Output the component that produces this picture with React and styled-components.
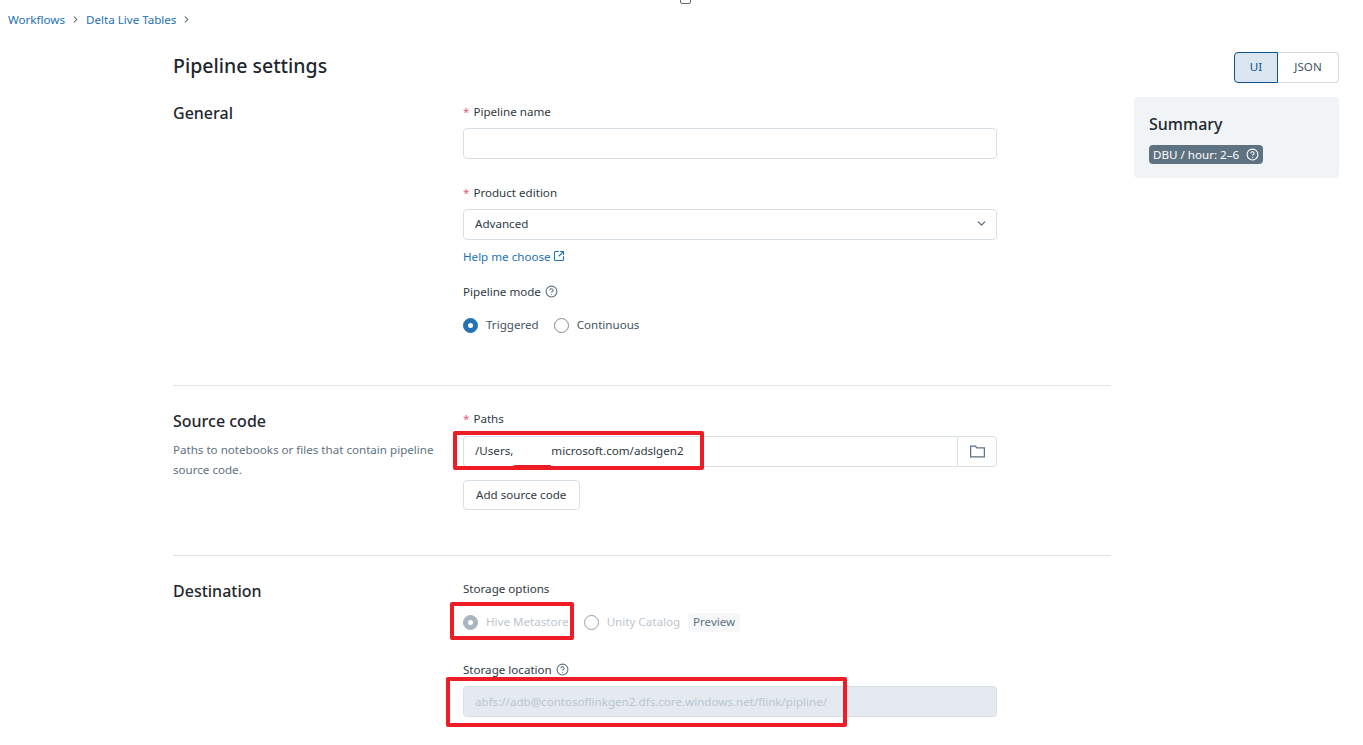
import styled, { createGlobalStyle } from "styled-components";
import { ChevronDown, ChevronRight, CircleHelp, SquareArrowOutUpRight } from "lucide-react";

export default function App() {
  return (
    <>
      <GlobalStyle />
      <Page>
        <GripHandle />
        <Breadcrumbs>
          <Crumb>Workflows</Crumb>
          <ChevronRight size={11} strokeWidth={2.2} />
          <Crumb>Delta Live Tables</Crumb>
          <ChevronRight size={11} strokeWidth={2.2} />
        </Breadcrumbs>
        <Columns>
          <Main>
            <Title>Pipeline settings</Title>

            <Section>
              <SectionIntro>
                <SectionTitle $nudge={-1}>General</SectionTitle>
              </SectionIntro>
              <SectionFields>
                <Label $required>Pipeline name</Label>
                <TextInput />
                <Label $required $top={24}>
                  Product edition
                </Label>
                <SelectBox>
                  Advanced
                  <ChevronDown size={13} color="#5f7281" strokeWidth={2.6} />
                </SelectBox>
                <HelpLink>
                  Help me choose
                  <SquareArrowOutUpRight size={12} strokeWidth={2.2} />
                </HelpLink>
                <Label $top={15}>
                  Pipeline mode
                  <CircleHelp size={13} color="#5f7281" />
                </Label>
                <RadioRow>
                  <RadioOption>
                    <Radio $checked />
                    <RadioText>Triggered</RadioText>
                  </RadioOption>
                  <RadioOption>
                    <Radio />
                    <RadioText>Continuous</RadioText>
                  </RadioOption>
                </RadioRow>
              </SectionFields>
            </Section>

            <Section $bottom={45}>
              <SectionIntro>
                <SectionTitle>Source code</SectionTitle>
                <SectionHint>
                  Paths to notebooks or files that contain pipeline source code.
                </SectionHint>
              </SectionIntro>
              <SectionFields>
                <Label $required $gap={7}>
                  Paths
                </Label>
                <PathGroup>
                  <PathValue>
                    /Users,<PathGap />microsoft.com/adslgen2
                  </PathValue>
                  <FolderButton>
                    <svg width="15" height="13" viewBox="0 0 15 13" fill="none" stroke="#5f7281" strokeWidth="1.3">
                      <path d="M.6 11.9V1.1h4.9l1.2 1.7h7.7v9.1z" />
                    </svg>
                  </FolderButton>
                  <PathMark />
                  <PathMarkTick />
                </PathGroup>
                <SecondaryButton>Add source code</SecondaryButton>
              </SectionFields>
            </Section>

            <Section $bottom={0} $plain>
              <SectionIntro>
                <SectionTitle>Destination</SectionTitle>
              </SectionIntro>
              <SectionFields>
                <Label>Storage options</Label>
                <StorageRow>
                  <RadioOption $disabled>
                    <Radio $checked $disabled />
                    <RadioText>Hive Metastore</RadioText>
                  </RadioOption>
                  <RadioOption $disabled>
                    <Radio $disabled />
                    <RadioText>Unity Catalog</RadioText>
                  </RadioOption>
                  <PreviewTag>Preview</PreviewTag>
                  <HiveMark />
                </StorageRow>
                <Label $top={28}>
                  Storage location
                  <CircleHelp size={13} color="#5f7281" />
                </Label>
                <DisabledInput>
                  abfs://adb@contosoflinkgen2.dfs.core.windows.net/flink/pipline/
                  <LocationMark />
                </DisabledInput>
              </SectionFields>
            </Section>
          </Main>

          <Aside>
            <ModeToggle>
              <ModeButton $active>UI</ModeButton>
              <ModeButton>JSON</ModeButton>
            </ModeToggle>
            <SummaryCard>
              <SummaryTitle>Summary</SummaryTitle>
              <SummaryChip>
                DBU / hour: 2–6
                <CircleHelp size={13} />
              </SummaryChip>
            </SummaryCard>
          </Aside>
        </Columns>
      </Page>
    </>
  );
}

const GlobalStyle = createGlobalStyle`
  html, body {
    margin: 0;
    height: 745px;
    overflow: hidden;
    background: #fff;
  }
  body {
    font-family: "Noto Sans", "Open Sans", sans-serif;
    font-size: 11.6px;
    color: #2f3a43;
  }
`;

const Page = styled.div`
  position: relative;
  height: 745px;
  overflow: hidden;
`;

const GripHandle = styled.div`
  position: absolute;
  top: -7px;
  left: 680px;
  width: 9px;
  height: 9px;
  border: 1px solid #6b6b6b;
  border-radius: 2px;
`;

const Breadcrumbs = styled.nav`
  display: flex;
  align-items: center;
  gap: 5px;
  height: 21px;
  padding: 9px 0 0 8px;
  color: #445461;
`;

const Crumb = styled.a`
  color: #2272b4;
`;

const Columns = styled.div`
  display: flex;
  align-items: flex-start;
  padding: 22px 24px 0 173px;
`;

const Main = styled.main`
  width: 938px;
  flex-shrink: 0;
`;

const Title = styled.h1`
  margin: 0;
  font-size: 19.5px;
  line-height: 28px;
  font-weight: 500;
  color: #1f272d;
`;

const Section = styled.section`
  display: flex;
  padding: 22px 0 ${({ $bottom }) => $bottom ?? 50}px;
  border-bottom: ${({ $plain }) => ($plain ? "none" : "1px solid #dfe5ea")};

  & + & {
    padding-top: 23px;
  }
`;

const SectionIntro = styled.div`
  width: 290px;
  flex-shrink: 0;
`;

const SectionTitle = styled.h2`
  margin: ${({ $nudge }) => $nudge ?? 0}px 0 0;
  font-size: 16px;
  line-height: 24px;
  font-weight: 500;
  color: #1f272d;
`;

const SectionHint = styled.p`
  margin: 7px 0 0;
  width: 272px;
  line-height: 20px;
  color: #5f7281;
`;

const SectionFields = styled.div`
  width: 534px;
`;

const Label = styled.div`
  display: flex;
  align-items: center;
  gap: 4px;
  box-sizing: border-box;
  height: 20px;
  padding-bottom: 2px;
  margin: ${({ $top }) => $top ?? 0}px 0 ${({ $gap }) => $gap ?? 6}px;

  ${({ $required }) =>
    $required &&
    `&::before {
      content: "*";
      color: #e65b77;
      margin-right: 0;
    }`}
`;

const TextInput = styled.div`
  box-sizing: border-box;
  height: 31px;
  border: 1px solid #d8e0e7;
  border-radius: 4px;
`;

const SelectBox = styled(TextInput)`
  display: flex;
  align-items: center;
  justify-content: space-between;
  padding: 0 8px 2px 11px;
`;

const HelpLink = styled.a`
  display: flex;
  align-items: center;
  gap: 2px;
  box-sizing: border-box;
  height: 20px;
  margin-top: 7px;
  padding-bottom: 2px;
  color: #2272b4;
`;

const RadioRow = styled.div`
  display: flex;
  align-items: center;
  gap: 15px;
  height: 20px;
  margin-top: 13px;
`;

const StorageRow = styled(RadioRow)`
  position: relative;
  margin-top: 13px;
`;

const RadioOption = styled.label`
  display: flex;
  align-items: center;
  gap: 8px;
  color: ${({ $disabled }) => ($disabled ? "#bcc6ce" : "#445461")};
`;

const RadioText = styled.span`
  padding-bottom: 2px;
`;

const Radio = styled.span`
  display: flex;
  align-items: center;
  justify-content: center;
  box-sizing: border-box;
  width: 15px;
  height: 15px;
  border-radius: 50%;
  border: 1px solid
    ${({ $checked, $disabled }) =>
      $disabled ? ($checked ? "#a9b6c1" : "#90a0ac") : $checked ? "#2272b4" : "#7b8b98"};
  background: ${({ $checked, $disabled }) =>
    $checked ? ($disabled ? "#a9b6c1" : "#2272b4") : "#fff"};

  &::after {
    content: "";
    display: ${({ $checked }) => ($checked ? "block" : "none")};
    width: 5px;
    height: 5px;
    border-radius: 50%;
    background: #fff;
  }
`;

const PreviewTag = styled.span`
  display: flex;
  align-items: center;
  box-sizing: border-box;
  height: 19px;
  margin-left: -7px;
  padding: 0 5px 2px;
  border-radius: 4px;
  background: #f5f7f8;
  color: #5f7281;
`;

const PathGroup = styled.div`
  position: relative;
  display: flex;
  height: 31px;
`;

const PathValue = styled(TextInput)`
  flex: 1;
  display: flex;
  align-items: center;
  padding: 0 11px 2px;
  border-right: none;
  border-radius: 4px 0 0 4px;
`;

const PathGap = styled.span`
  width: 38px;
`;

const FolderButton = styled.div`
  display: flex;
  align-items: center;
  justify-content: center;
  width: 38px;
  border: 1px solid #d8e0e7;
  border-radius: 0 4px 4px 0;
`;

const SecondaryButton = styled.button`
  display: block;
  height: 30px;
  margin-top: 13px;
  padding: 0 13px 2px 12px;
  background: #fff;
  border: 1px solid #d8e0e7;
  border-radius: 4px;
  font-family: inherit;
  font-size: inherit;
  color: inherit;
`;

const DisabledInput = styled(TextInput)`
  position: relative;
  display: flex;
  align-items: center;
  padding: 0 11px;
  background: #e4eaf0;
  color: #b9c6d2;
  white-space: nowrap;
`;

const RedMark = styled.div`
  position: absolute;
  box-sizing: border-box;
  border: 4px solid #ee1c25;
  border-radius: 2px;
  pointer-events: none;
`;

const PathMark = styled(RedMark)`
  top: -5px;
  left: -10px;
  width: 251px;
  height: 39px;
`;

const PathMarkTick = styled.div`
  position: absolute;
  top: 29px;
  left: 51px;
  width: 37px;
  height: 3px;
  background: #ee1c25;
`;

const HiveMark = styled(RedMark)`
  top: -10px;
  left: -13px;
  width: 124px;
  height: 38px;
`;

const LocationMark = styled(RedMark)`
  top: -10px;
  left: -18px;
  width: 401px;
  height: 50px;
`;

const Aside = styled.aside`
  width: 205px;
  margin-left: 23px;
  flex-shrink: 0;
`;

const ModeToggle = styled.div`
  display: flex;
  justify-content: flex-end;
  height: 31px;
`;

const ModeButton = styled.div`
  display: flex;
  align-items: center;
  justify-content: center;
  box-sizing: border-box;
  width: ${({ $active }) => ($active ? 44 : 61)}px;
  padding-bottom: 2px;
  border: 1px solid ${({ $active }) => ($active ? "#0e538b" : "#d1d9e1")};
  border-left-width: ${({ $active }) => ($active ? 1 : 0)}px;
  border-radius: ${({ $active }) => ($active ? "4px 0 0 4px" : "0 4px 4px 0")};
  background: ${({ $active }) => ($active ? "#dbe6f1" : "#fff")};
  color: ${({ $active }) => ($active ? "#0e538b" : "#445461")};
`;

const SummaryCard = styled.div`
  box-sizing: border-box;
  height: 81px;
  margin-top: 14px;
  padding: 16px 15px;
  border-radius: 4px;
  background: #f0f4f7;
`;

const SummaryTitle = styled.div`
  font-size: 16px;
  line-height: 22px;
  font-weight: 500;
  color: #1f272d;
`;

const SummaryChip = styled.div`
  display: inline-flex;
  align-items: center;
  gap: 7px;
  box-sizing: border-box;
  height: 19px;
  margin-top: 10px;
  padding: 0 4px 1px;
  border-radius: 4px;
  background: #5f7281;
  color: #fff;
`;
